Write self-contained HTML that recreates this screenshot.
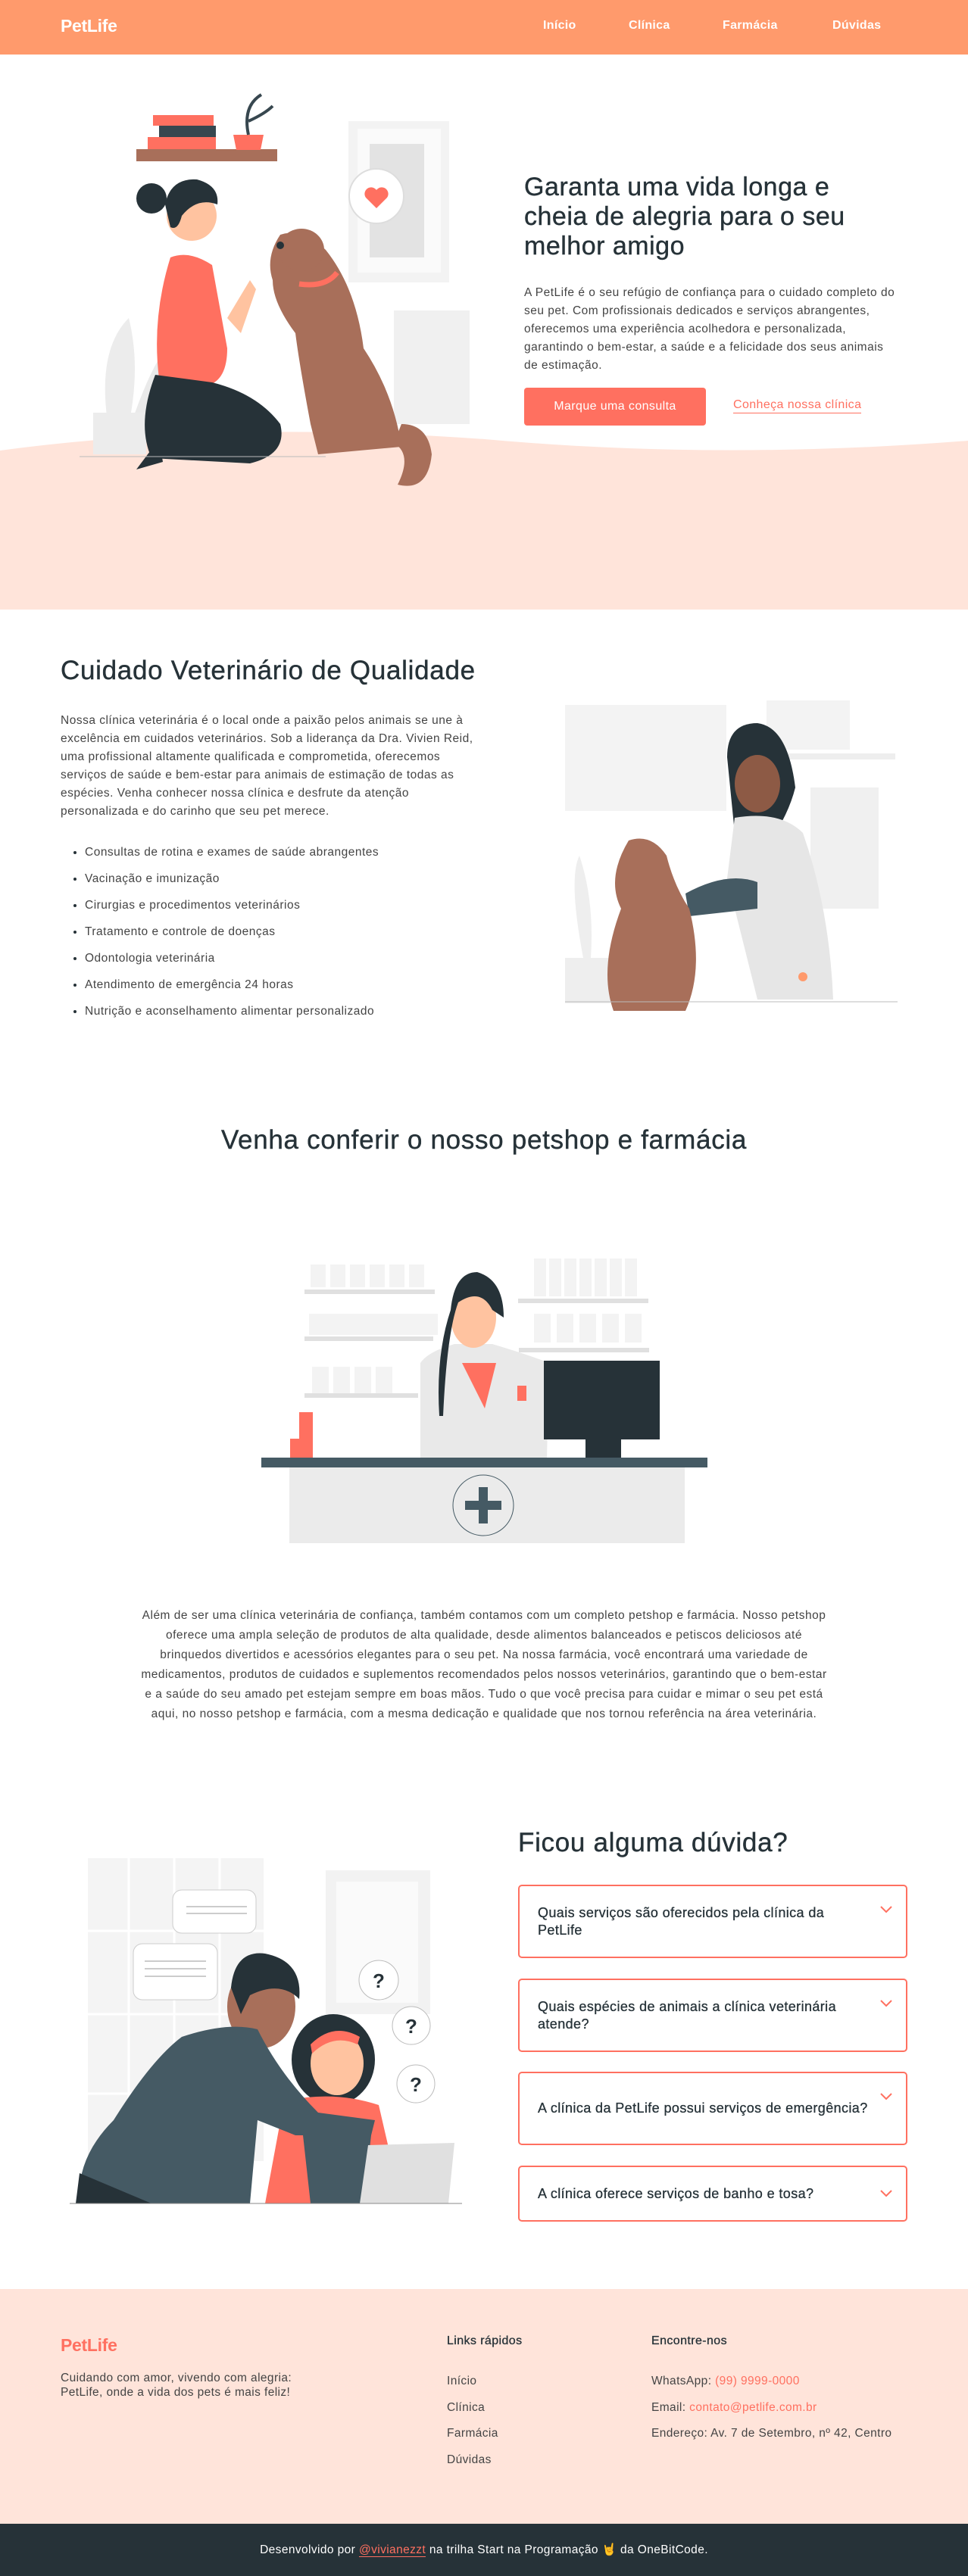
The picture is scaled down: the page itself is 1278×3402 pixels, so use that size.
<!DOCTYPE html>
<html><head><meta charset="utf-8">
<style>
*{margin:0;padding:0;box-sizing:border-box}
body{width:1278px;height:3402px;position:relative;background:#fff;font-family:"Liberation Sans",sans-serif;color:#263238;overflow:hidden}
.a{position:absolute}
header{position:absolute;left:0;top:0;width:1278px;height:72px;background:#FF9A6C}
.logo{font-weight:bold;font-size:23px;letter-spacing:-0.3px}
.nav{color:#fff;font-size:16px;font-weight:bold;top:25px;letter-spacing:0.3px}
h1{font-weight:normal;font-size:34px;line-height:39px;color:#263238;letter-spacing:0.5px;-webkit-text-stroke:0.4px #263238}
h2{font-weight:normal;font-size:35px;line-height:40px;color:#263238;letter-spacing:0.7px;-webkit-text-stroke:0.4px #263238}
p.t{font-size:15.5px;line-height:24px;color:#444;letter-spacing:0.5px}
ul.l{list-style:none}
ul.l li{font-size:15.5px;line-height:35px;color:#444;position:relative;padding-left:32px;letter-spacing:0.5px}
ul.l li:before{content:"";position:absolute;left:17px;top:16px;width:4px;height:4px;border-radius:50%;background:#263238}
.faq{position:absolute;left:684px;width:514px;border:2px solid #FF7060;border-radius:5px;font-size:18px;line-height:23px;color:#263238;padding:0 50px 0 24px;display:flex;align-items:center;letter-spacing:0.4px;-webkit-text-stroke:0.3px #263238}
.faq svg{position:absolute;right:18px;top:26px}
.fl{font-size:15.5px;color:#444;letter-spacing:0.4px}
</style></head><body>
<header>
<div class="a logo" style="left:80px;top:21px;color:#fff">PetLife</div>
<div class="a nav" style="left:717px">Início</div>
<div class="a nav" style="left:830px">Clínica</div>
<div class="a nav" style="left:954px">Farmácia</div>
<div class="a nav" style="left:1099px">Dúvidas</div>
</header>

<svg class="a" style="left:0;top:560px" width="1278" height="245"><path d="M0 35 Q300 -5 640 20 Q950 48 1278 22 L1278 245 L0 245Z" fill="#FFE4DA"/></svg>

<svg class="a" style="left:90px;top:120px" width="570" height="540" viewBox="90 120 570 540">
<rect x="460" y="160" width="133" height="213" fill="#f3f3f3"/><rect x="472" y="170" width="110" height="190" fill="#fafafa"/><rect x="488" y="190" width="72" height="150" fill="#e3e3e3"/>
<rect x="520" y="410" width="100" height="150" fill="#f0f0f0"/>
<path d="M150 600 Q120 470 170 420 Q190 500 160 600Z" fill="#ececec"/><path d="M160 600 Q200 470 230 450 Q215 530 170 600Z" fill="#eaeaea"/>
<rect x="123" y="545" width="70" height="55" fill="#ececec"/>
<rect x="180" y="197" width="186" height="16" fill="#A86F5A"/>
<rect x="195" y="181" width="90" height="16" fill="#FF7060"/><rect x="210" y="166" width="75" height="15" fill="#37474F"/><rect x="202" y="152" width="80" height="14" fill="#FF7060"/>
<path d="M308 178 h40 l-4 20 h-32z" fill="#FF7060"/><path d="M328 178 Q320 140 345 125 M328 160 Q350 150 360 140" stroke="#37474F" stroke-width="4" fill="none"/>
<circle cx="497" cy="259" r="36" fill="#fff" stroke="#ddd" stroke-width="2"/><path d="M497 275 l-14 -14 a8 8 0 0 1 14 -10 a8 8 0 0 1 14 10z" fill="#FF7060"/>
<circle cx="253" cy="285" r="33" fill="#FFC3A0"/><path d="M218 270 Q225 235 260 237 Q290 245 287 270 Q260 260 240 285 Q235 305 225 300Z" fill="#263238"/><circle cx="200" cy="262" r="20" fill="#263238"/>
<path d="M225 340 Q250 330 280 350 L300 460 Q300 505 270 510 L210 500 Q200 420 225 340Z" fill="#FF7060"/>
<path d="M300 420 L330 370 L338 382 L318 440Z" fill="#FFC3A0"/>
<path d="M205 495 Q180 560 200 605 L330 612 Q380 600 370 560 Q340 520 280 505Z" fill="#263238"/>
<path d="M180 620 L210 580 L215 610Z" fill="#263238"/>
<path d="M370 310 Q400 300 430 330 Q470 380 480 460 Q520 520 530 590 L420 600 L410 560 Q395 480 390 440 Q360 400 360 370 Q350 340 370 310Z" fill="#A86F5A"/>
<ellipse cx="398" cy="330" rx="30" ry="28" fill="#A86F5A"/><circle cx="370" cy="324" r="5" fill="#263238"/>
<path d="M395 375 Q430 380 445 360" stroke="#FF7060" stroke-width="7" fill="none"/>
<path d="M530 560 Q565 560 570 600 Q565 650 525 640 Q545 600 520 585Z" fill="#A86F5A"/>
<line x1="105" y1="603" x2="430" y2="603" stroke="#bbb"/>
</svg>

<h1 class="a" style="left:692px;top:228px;width:440px">Garanta uma vida longa e cheia de alegria para o seu melhor amigo</h1>
<p class="a t" style="left:692px;top:375px;width:490px">A PetLife é o seu refúgio de confiança para o cuidado completo do seu pet. Com profissionais dedicados e serviços abrangentes, oferecemos uma experiência acolhedora e personalizada, garantindo o bem-estar, a saúde e a felicidade dos seus animais de estimação.</p>
<div class="a" style="left:692px;top:512px;width:240px;height:50px;background:#FF7060;border-radius:4px;color:#fff;font-size:16px;line-height:50px;text-align:center;letter-spacing:0.4px">Marque uma consulta</div>
<div class="a" style="left:968px;top:525px;color:#FF7060;font-size:16px;border-bottom:1px solid #FF7060;line-height:20px;letter-spacing:0.4px">Conheça nossa clínica</div>

<h2 class="a" style="left:80px;top:866px">Cuidado Veterinário de Qualidade</h2>
<p class="a t" style="left:80px;top:940px;width:565px">Nossa clínica veterinária é o local onde a paixão pelos animais se une à excelência em cuidados veterinários. Sob a liderança da Dra. Vivien Reid, uma profissional altamente qualificada e comprometida, oferecemos serviços de saúde e bem-estar para animais de estimação de todas as espécies. Venha conhecer nossa clínica e desfrute da atenção personalizada e do carinho que seu pet merece.</p>
<ul class="a l" style="left:80px;top:1108px">
<li>Consultas de rotina e exames de saúde abrangentes</li>
<li>Vacinação e imunização</li>
<li>Cirurgias e procedimentos veterinários</li>
<li>Tratamento e controle de doenças</li>
<li>Odontologia veterinária</li>
<li>Atendimento de emergência 24 horas</li>
<li>Nutrição e aconselhamento alimentar personalizado</li>
</ul>
<svg class="a" style="left:740px;top:910px" width="450" height="440" viewBox="740 910 450 440">
<rect x="746" y="931" width="213" height="140" fill="#f3f3f3"/>
<rect x="1012" y="925" width="110" height="65" fill="#f3f3f3"/><rect x="1000" y="995" width="182" height="8" fill="#eee"/>
<rect x="1070" y="1040" width="90" height="160" fill="#f0f0f0"/>
<rect x="746" y="1265" width="60" height="60" fill="#eee"/><path d="M770 1265 Q750 1160 765 1130 Q785 1190 780 1265Z" fill="#eee"/>
<path d="M960 1000 Q960 955 1000 955 Q1040 960 1050 1040 Q1040 1080 1010 1120 L970 1100Z" fill="#263238"/>
<ellipse cx="1000" cy="1035" rx="30" ry="38" fill="#8D5A45"/>
<path d="M970 1080 Q1030 1070 1060 1100 Q1095 1200 1100 1320 L1000 1320 L960 1160Z" fill="#e6e6e6"/>
<path d="M905 1180 Q960 1150 1000 1165 L1000 1200 L910 1210Z" fill="#455A64"/>
<path d="M830 1110 Q860 1100 880 1130 Q890 1170 910 1200 Q930 1280 905 1335 L810 1335 Q790 1280 820 1200 Q800 1160 830 1110Z" fill="#A86F5A"/>
<circle cx="1060" cy="1290" r="6" fill="#FF9A6C"/>
<line x1="746" y1="1323" x2="1185" y2="1323" stroke="#bbb"/>
</svg>

<h2 class="a" style="left:0;width:1278px;text-align:center;top:1486px">Venha conferir o nosso petshop e farmácia</h2>

<svg class="a" style="left:340px;top:1650px" width="600" height="400" viewBox="340 1650 600 400">
<g fill="#f3f3f3"><rect x="410" y="1670" width="20" height="30"/><rect x="436" y="1670" width="20" height="30"/><rect x="462" y="1670" width="20" height="30"/><rect x="488" y="1670" width="20" height="30"/><rect x="514" y="1670" width="20" height="30"/><rect x="540" y="1670" width="20" height="30"/>
<rect x="408" y="1735" width="170" height="28"/><rect x="412" y="1805" width="22" height="35"/><rect x="440" y="1805" width="22" height="35"/><rect x="468" y="1805" width="22" height="35"/><rect x="496" y="1805" width="22" height="35"/>
<rect x="705" y="1662" width="16" height="50"/><rect x="725" y="1662" width="16" height="50"/><rect x="745" y="1662" width="16" height="50"/><rect x="765" y="1662" width="16" height="50"/><rect x="785" y="1662" width="16" height="50"/><rect x="805" y="1662" width="16" height="50"/><rect x="825" y="1662" width="16" height="50"/>
<rect x="705" y="1735" width="22" height="38"/><rect x="735" y="1735" width="22" height="38"/><rect x="765" y="1735" width="22" height="38"/><rect x="795" y="1735" width="22" height="38"/><rect x="825" y="1735" width="22" height="38"/></g>
<g fill="#e0e0e0"><rect x="402" y="1703" width="172" height="6"/><rect x="402" y="1765" width="170" height="6"/><rect x="402" y="1840" width="150" height="6"/><rect x="684" y="1715" width="172" height="6"/><rect x="685" y="1780" width="172" height="6"/></g>
<path d="M555 1800 Q565 1785 600 1775 L650 1775 Q700 1790 725 1800 L722 1926 L555 1926Z" fill="#e9e9e9"/>
<path d="M610 1800 L640 1860 L655 1800Z" fill="#FF7060"/>
<ellipse cx="625" cy="1740" rx="30" ry="40" fill="#FFC3A0"/>
<path d="M595 1730 Q600 1680 630 1680 Q665 1690 665 1740 L650 1730 Q635 1700 605 1720 Q590 1760 585 1870 L580 1870 Q575 1790 595 1730Z" fill="#263238"/>
<rect x="683" y="1830" width="12" height="20" fill="#FF7060"/>
<rect x="395" y="1865" width="18" height="60" fill="#FF7060"/><rect x="383" y="1900" width="18" height="25" fill="#FF7060"/>
<rect x="718" y="1797" width="153" height="104" fill="#263238"/><rect x="773" y="1870" width="47" height="56" fill="#263238"/>
<rect x="345" y="1925" width="589" height="13" fill="#455A64"/>
<rect x="382" y="1938" width="522" height="100" fill="#ebebeb"/>
<circle cx="638" cy="1988" r="40" fill="none" stroke="#455A64" stroke-width="1"/>
<rect x="614" y="1982" width="48" height="12" fill="#455A64"/><rect x="632" y="1964" width="12" height="48" fill="#455A64"/>
</svg>

<p class="a t" style="left:185px;top:2121px;width:908px;text-align:center;line-height:26px">Além de ser uma clínica veterinária de confiança, também contamos com um completo petshop e farmácia. Nosso petshop oferece uma ampla seleção de produtos de alta qualidade, desde alimentos balanceados e petiscos deliciosos até brinquedos divertidos e acessórios elegantes para o seu pet. Na nossa farmácia, você encontrará uma variedade de medicamentos, produtos de cuidados e suplementos recomendados pelos nossos veterinários, garantindo que o bem-estar e a saúde do seu amado pet estejam sempre em boas mãos. Tudo o que você precisa para cuidar e mimar o seu pet está aqui, no nosso petshop e farmácia, com a mesma dedicação e qualidade que nos tornou referência na área veterinária.</p>

<svg class="a" style="left:90px;top:2440px" width="530" height="480" viewBox="90 2440 530 480">
<rect x="116" y="2454" width="232" height="400" fill="#f4f4f4"/>
<g stroke="#fff" stroke-width="3"><line x1="170" y1="2454" x2="170" y2="2855"/><line x1="230" y1="2454" x2="230" y2="2855"/><line x1="290" y1="2454" x2="290" y2="2855"/><line x1="116" y1="2550" x2="348" y2="2550"/><line x1="116" y1="2660" x2="348" y2="2660"/><line x1="116" y1="2765" x2="348" y2="2765"/></g>
<rect x="430" y="2470" width="138" height="190" fill="#f2f2f2"/><rect x="444" y="2485" width="108" height="160" fill="#fafafa"/>
<rect x="228" y="2496" width="110" height="57" rx="12" fill="#fff" stroke="#ccc"/><rect x="176" y="2567" width="111" height="74" rx="12" fill="#fff" stroke="#ccc"/>
<g stroke="#999"><line x1="246" y1="2518" x2="326" y2="2518"/><line x1="246" y1="2527" x2="326" y2="2527"/><line x1="191" y1="2590" x2="272" y2="2590"/><line x1="191" y1="2600" x2="272" y2="2600"/><line x1="191" y1="2610" x2="272" y2="2610"/></g>
<circle cx="500" cy="2615" r="26" fill="#fff" stroke="#bbb"/><circle cx="543" cy="2675" r="25" fill="#fff" stroke="#bbb"/><circle cx="549" cy="2752" r="25" fill="#fff" stroke="#bbb"/>
<text x="500" y="2625" font-size="26" font-weight="bold" text-anchor="middle" fill="#263238">?</text><text x="543" y="2685" font-size="26" font-weight="bold" text-anchor="middle" fill="#263238">?</text><text x="549" y="2762" font-size="26" font-weight="bold" text-anchor="middle" fill="#263238">?</text>
<ellipse cx="440" cy="2720" rx="55" ry="60" fill="#263238"/><ellipse cx="445" cy="2725" rx="35" ry="42" fill="#FFC3A0"/><path d="M410 2700 Q440 2670 475 2690 L472 2700 Q440 2685 412 2712Z" fill="#FF7060"/>
<path d="M375 2775 Q440 2760 500 2780 L530 2910 L350 2910Z" fill="#FF7060"/><path d="M400 2820 L490 2820 L480 2910 L410 2910Z" fill="#455A64"/>
<ellipse cx="345" cy="2650" rx="45" ry="55" fill="#A86F5A"/><path d="M305 2625 Q310 2575 350 2580 Q400 2590 395 2640 Q370 2615 330 2635 L318 2660Z" fill="#263238"/>
<path d="M240 2690 Q300 2670 340 2680 Q370 2740 420 2790 L495 2800 L490 2820 L390 2820 L340 2800 L330 2910 L105 2910 Q100 2850 150 2800 Q200 2720 240 2690Z" fill="#455A64"/>
<path d="M105 2870 L200 2910 L100 2910Z" fill="#263238"/>
<path d="M486 2833 L600 2830 L592 2910 L475 2910Z" fill="#e0e0e0"/>
<line x1="92" y1="2910" x2="610" y2="2910" stroke="#888"/>
</svg>

<h2 class="a" style="left:684px;top:2414px;font-size:35px">Ficou alguma dúvida?</h2>
<div class="faq" style="top:2489px;height:97px">Quais serviços são oferecidos pela clínica da PetLife<svg width="16" height="10"><path d="M1 1 L8 8 L15 1" stroke="#FF7060" stroke-width="2" fill="none"/></svg></div>
<div class="faq" style="top:2613px;height:97px">Quais espécies de animais a clínica veterinária atende?<svg width="16" height="10"><path d="M1 1 L8 8 L15 1" stroke="#FF7060" stroke-width="2" fill="none"/></svg></div>
<div class="faq" style="top:2736px;height:97px">A clínica da PetLife possui serviços de emergência?<svg width="16" height="10"><path d="M1 1 L8 8 L15 1" stroke="#FF7060" stroke-width="2" fill="none"/></svg></div>
<div class="faq" style="top:2860px;height:74px">A clínica oferece serviços de banho e tosa?<svg width="16" height="10" style="top:30px"><path d="M1 1 L8 8 L15 1" stroke="#FF7060" stroke-width="2" fill="none"/></svg></div>

<div class="a" style="left:0;top:3023px;width:1278px;height:310px;background:#FFE4DA"></div>
<div class="a logo" style="left:80px;top:3084px;color:#FF7060">PetLife</div>
<div class="a fl" style="left:80px;top:3131px;line-height:19px">Cuidando com amor, vivendo com alegria:<br>PetLife, onde a vida dos pets é mais feliz!</div>
<div class="a" style="left:590px;top:3083px;font-size:16px;color:#263238;letter-spacing:0.4px;-webkit-text-stroke:0.3px #263238">Links rápidos</div>
<div class="a fl" style="left:590px;top:3128px;line-height:34.5px">Início<br>Clínica<br>Farmácia<br>Dúvidas</div>
<div class="a" style="left:860px;top:3083px;font-size:16px;color:#263238;letter-spacing:0.4px;-webkit-text-stroke:0.3px #263238">Encontre-nos</div>
<div class="a fl" style="left:860px;top:3128px;line-height:34.5px">WhatsApp: <span style="color:#FF7060">(99) 9999-0000</span><br>Email: <span style="color:#FF7060">contato@petlife.com.br</span><br>Endereço: Av. 7 de Setembro, nº 42, Centro</div>
<div class="a" style="left:0;top:3333px;width:1278px;height:69px;background:#263238;color:#fff;font-size:15.5px;text-align:center;line-height:69px;letter-spacing:0.4px">Desenvolvido por <span style="color:#FF7060;border-bottom:1px solid #FF7060">@vivianezzt</span> na trilha Start na Programação 🤘 da OneBitCode.</div>
</body></html>
